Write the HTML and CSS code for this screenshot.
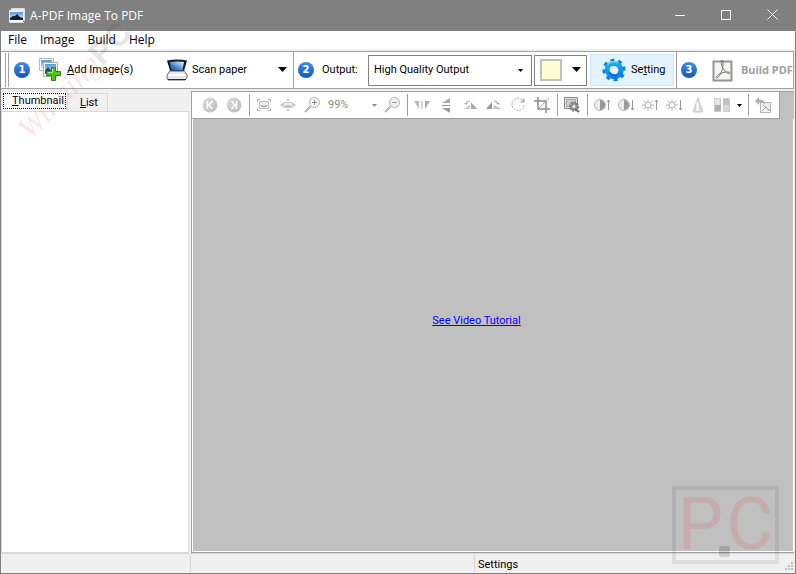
FILE: index.html
```html
<!DOCTYPE html>
<html lang="en">
<head>
<meta charset="utf-8">
<title>A-PDF Image To PDF</title>
<link rel="stylesheet" href="styles.css">
</head>
<body>
<svg class="defs" aria-hidden="true">
  <defs>
    <linearGradient id="sky" x1="0" y1="0" x2="0" y2="1"><stop offset="0" stop-color="#4d9ae0"/><stop offset="1" stop-color="#e4f2fc"/></linearGradient>
    <linearGradient id="scan" x1="0" y1="1" x2="1" y2="0"><stop offset="0" stop-color="#0b3f86"/><stop offset=".5" stop-color="#5c9fd8"/><stop offset="1" stop-color="#f4faff"/></linearGradient>
    <linearGradient id="grey" x1="0" y1="0" x2="1" y2="1"><stop offset="0" stop-color="#dedede"/><stop offset="1" stop-color="#b9b9b9"/></linearGradient>
    <linearGradient id="gear" x1="0" y1="0" x2="1" y2="1"><stop offset="0" stop-color="#27b1fb"/><stop offset="1" stop-color="#0679e4"/></linearGradient>
  </defs>
</svg>
<div class="window">
  <header class="titlebar">
    <svg class="app-icon" width="16" height="16" viewBox="0 0 16 16"><path d="M2.5.5h13v12h-13z" fill="#eee" stroke="#ddd"/><path d="M.5 2.500h13v12H.5z" fill="#fff" stroke="#e8e8e8"/><path d="M1 4h13v8H1z" fill="url(#sky)"/><path d="M1 12v-2l3-2 2 0 2-2 3 3 3 1v2z" fill="#16202a"/><path d="M1 14.500h14" stroke="#ddd"/></svg>
    <h1>A-PDF Image To PDF</h1>
    <div class="window-buttons">
      <button type="button" aria-label="Minimize"><svg width="11" height="11" viewBox="0 0 11 11"><path d="M0 6.500h10"/></svg></button>
      <button type="button" aria-label="Maximize"><svg width="11" height="11" viewBox="0 0 11 11"><path d="M.5 1.500h9v9h-9z"/></svg></button>
      <button type="button" aria-label="Close"><svg width="11" height="11" viewBox="0 0 11 11"><path d="M.5.5l10 10M10.500.5l-10 10"/></svg></button>
    </div>
  </header>

  <nav class="menubar">
    <button type="button">File</button>
    <button type="button">Image</button>
    <button type="button">Build</button>
    <button type="button">Help</button>
  </nav>

  <div class="toolbar">
    <span class="grip"></span>
    <span class="step">1</span>
    <button type="button" class="tool add">
      <svg width="23" height="24" viewBox="0 0 23 24"><path d="M.5.5h14v12H.5z" fill="#fff" stroke="#b4b8b8"/><path d="M2 2h11v9H2z" fill="url(#sky)"/><path d="M4.500 4.500h14v14h-14z" fill="#fff" stroke="#a8adad"/><path d="M6 6h11v10H6z" fill="url(#sky)"/><path d="M6 16v-4l3-3 3 3v4z" fill="#34515c"/><path d="M12.500 9.500h4v4h5v4h-5v5h-4v-5h-5v-4h5z" fill="#49c51b" stroke="#238a16" stroke-linejoin="round"/><path d="M13.500 11v3.500H9" fill="none" stroke="#a9ee6c"/></svg>
      <span><u>A</u>dd Image(s)</span>
    </button>
    <button type="button" class="tool scan">
      <svg width="22" height="22" viewBox="0 0 22 22"><path d="M1 1.500Q11-.5 21 1.500L18 12H4z" fill="#111c28"/><path d="M4 3q7-1 14 0l-1.500 8H5z" fill="url(#scan)"/><path d="M4 12h14l3 4v3l-2 2H2l-1-2v-3z" fill="#e6e9ec" stroke="#5f6770"/><path d="M3 16h16" stroke="#fff" stroke-width="2"/><path d="M2 20.500h18" stroke="#252d35"/><path d="M7 12.500h9" stroke="#8aa4ba"/></svg>
      <span>Scan paper</span>
      <svg class="arrow" width="9" height="6" viewBox="0 0 9 6"><path d="M0 0h9L4.500 5z"/></svg>
    </button>
    <span class="divider"></span>
    <span class="step">2</span>
    <label class="output-label" for="output">Output:</label>
    <span class="select-box">
      <select id="output"><option>High Quality Output</option></select>
      <svg class="arrow" width="5" height="3" viewBox="0 0 5 3"><path d="M0 0h5L2.500 3z"/></svg>
    </span>
    <button type="button" class="color-box" aria-label="Background color">
      <span class="swatch"></span>
      <svg class="arrow" width="9" height="6" viewBox="0 0 9 6"><path d="M0 0h9L4.500 5z"/></svg>
    </button>
    <button type="button" class="tool setting">
      <svg width="24" height="24" viewBox="-12 -12 24 24"><g fill="none" transform="rotate(25)"><ellipse rx="9.500" ry="9" pathLength="16" stroke="#0b82e6" stroke-width="4.500" stroke-dasharray="1 1"/><ellipse rx="7" ry="6.500" stroke="url(#gear)" stroke-width="5"/><path d="M-8-2Q-7-8 0-8" stroke="#6fd2ff" stroke-width="1.500"/><path d="M5 3Q2 7-4 4" stroke="#0a62c4"/></g></svg>
      <span>Se<u>t</u>ting</span>
    </button>
    <span class="divider"></span>
    <span class="step">3</span>
    <button type="button" class="tool build" disabled>
      <svg width="22" height="23" viewBox="0 0 22 23"><path d="M1.500 2.500h18v19h-18z" fill="#f4f4f2" stroke="#96968f" stroke-width="2"/><path d="M10 1c-2 2 0 8 3 11 2 3 5 3 5 2 0-2-9-1-12 2-2 2-2 3-1 3 2 0 6-8 6-13 0-3 0-5-1-5z" fill="none" stroke="#777"/></svg>
      <span>Build PDF</span>
    </button>
  </div>

  <main class="workspace">
    <aside class="sidebar">
      <div class="tabs" role="tablist">
        <button type="button" role="tab" aria-selected="true" class="tab active"><span><u>T</u>humbnail</span></button>
        <button type="button" role="tab" aria-selected="false" class="tab"><span><u>L</u>ist</span></button>
      </div>
      <div class="thumbs" role="tabpanel"></div>
    </aside>

    <section class="viewer">
      <div class="image-tools">
        <button type="button" aria-label="Previous"><svg viewBox="0 0 16 16"><circle cx="8" cy="8" r="7.500" fill="url(#grey)"/><path d="M5.500 4v8M10.500 4L7 8l3.500 4" fill="none" stroke="#fff" stroke-width="1.500"/></svg></button>
        <button type="button" aria-label="Next"><svg viewBox="0 0 16 16"><circle cx="8" cy="8" r="7.500" fill="url(#grey)"/><path d="M10.500 4v8M5.500 4L9 8l-3.500 4" fill="none" stroke="#fff" stroke-width="1.500"/></svg></button>
        <span class="divider"></span>
        <button type="button" aria-label="Fit window"><svg viewBox="0 0 16 16"><path d="M1.500 5V2.500H4M12 2.500h2.500V5M1.500 11v2.500H4M12 13.500h2.500V11" fill="none" stroke="#aaa"/><path d="M3.500 4.500h9v7h-9z" fill="#eee" stroke="#c4c4c4"/><path d="M5 10V9l1-1 2 1 2-1 1 1v1z" fill="#aaa"/></svg></button>
        <button type="button" aria-label="Actual size"><svg viewBox="0 0 16 16"><path d="M3.500 5.500h9v5h-9z" fill="#eee" stroke="#ccc"/><path d="M5 10V9l2-1 1 1 1-1 2 1v1z" fill="#bbb"/><path d="M8 1l2 3H6zM8 15l2-3H6zM0 8l3-2v4zM16 8l-3-2v4z" fill="#ccc"/></svg></button>
        <button type="button" aria-label="Zoom in"><svg viewBox="0 0 16 16"><circle cx="10.500" cy="5.500" r="5" fill="#f4f4f4" stroke="#b4b4b4"/><path d="M10.500 3v5M8 5.500h5" stroke="#888"/><path d="M1 15L6.500 9.500" stroke="#b0b0b0" stroke-width="2"/></svg></button>
        <span class="zoom"><span>99%</span><svg class="arrow" width="5" height="3" viewBox="0 0 5 3"><path d="M0 0h5L2.500 3z"/></svg></span>
        <button type="button" aria-label="Zoom out"><svg viewBox="0 0 16 16"><circle cx="10.500" cy="5.500" r="5" fill="#eee" stroke="#b4b4b4"/><path d="M8 5.500h5" stroke="#999"/><path d="M1 15L6.500 9.500" stroke="#b5b5b5" stroke-width="2"/></svg></button>
        <span class="divider"></span>
        <button type="button" aria-label="Flip horizontally"><svg viewBox="0 0 16 16"><path d="M0 4h5v8z" fill="#bbb"/><path d="M8 4v8" stroke="#aaa"/><path d="M11 4h5l-5 8z" fill="#aaa"/></svg></button>
        <button type="button" aria-label="Flip vertically"><svg viewBox="0 0 16 16"><path d="M12 1v5H4z" fill="#aaa"/><path d="M4 8.500h8" stroke="#999"/><path d="M4 11h8v5z" fill="#999"/></svg></button>
        <button type="button" aria-label="Rotate left"><svg viewBox="0 0 16 16"><path d="M1 12h7V8z" fill="#ccc"/><path d="M9 12h6L9 5z" fill="#aaa"/><path d="M4 7q0-3 4-3" fill="none" stroke="#aaa"/><path d="M2 6h4L4 8z" fill="#aaa"/></svg></button>
        <button type="button" aria-label="Rotate right"><svg viewBox="0 0 16 16"><path d="M0 12h6V5z" fill="#999"/><path d="M7 12h9L8 8z" fill="#c4c4c4"/><path d="M8 4q4 0 4 3" fill="none" stroke="#aaa"/><path d="M10 6h4l-2 2z" fill="#aaa"/></svg></button>
        <button type="button" aria-label="Rotate by angle"><svg viewBox="0 0 16 16"><path d="M12 3A6 6 0 1 0 14 8" fill="none" stroke="#aaa" stroke-dasharray="2 1"/><path d="M10 5.500h4.500V1z" fill="#aaa"/></svg></button>
        <button type="button" aria-label="Crop"><svg viewBox="0 0 16 16"><path d="M4 0v12h12M0 4h12v12" fill="none" stroke="#8d8d8d" stroke-width="1.500"/><path d="M4 12L15 1" stroke="#aaa"/></svg></button>
        <span class="divider"></span>
        <button type="button" aria-label="Image options"><svg viewBox="0 0 16 16"><path d="M.5.5h13v11H.5z" fill="#ddd" stroke="#888"/><path d="M2.500 2.500h9v7h-9z" fill="#ccc" stroke="#aaa"/><circle cx="10" cy="9.500" r="4" fill="#999" stroke="#777" stroke-width="2" stroke-dasharray="2 1"/><circle cx="10" cy="9.500" r="1.500" fill="#eee"/><path d="M11 12l4 3" stroke="#666" stroke-width="2"/></svg></button>
        <span class="divider"></span>
        <button type="button" aria-label="Increase contrast"><svg viewBox="0 0 16 16"><circle cx="6" cy="8" r="5.500" fill="#eee" stroke="#b4b4b4"/><path d="M6 3a5 5 0 0 1 0 10z" fill="#999"/><path d="M14.500 13V3M13 5l1.500-2L16 5" fill="none" stroke="#999"/></svg></button>
        <button type="button" aria-label="Decrease contrast"><svg viewBox="0 0 16 16"><circle cx="6" cy="8" r="5.500" fill="#eee" stroke="#b4b4b4"/><path d="M6 3a5 5 0 0 1 0 10z" fill="#999"/><path d="M14.500 3v10M13 11l1.500 2 1.500-2" fill="none" stroke="#999"/></svg></button>
        <button type="button" aria-label="Increase brightness"><svg viewBox="0 0 16 16"><path d="M6 2v12M0 8h12M1.500 3.500l9 9M10.500 3.500l-9 9" stroke="#bbb"/><circle cx="6" cy="8" r="3" fill="#f4f4f4" stroke="#bbb"/><path d="M14.500 13V3M13 5l1.500-2L16 5" fill="none" stroke="#999"/></svg></button>
        <button type="button" aria-label="Decrease brightness"><svg viewBox="0 0 16 16"><path d="M6 2v12M0 8h12M1.500 3.500l9 9M10.500 3.500l-9 9" stroke="#bbb"/><circle cx="6" cy="8" r="3" fill="#f4f4f4" stroke="#bbb"/><path d="M14.500 3v10M13 11l1.500 2 1.500-2" fill="none" stroke="#999"/></svg></button>
        <button type="button" aria-label="Sharpen"><svg viewBox="0 0 16 16"><path d="M8 1l5 14H3z" fill="#ddd" stroke="#c8c8c8"/><path d="M7.500 5v9" stroke="#fafafa" stroke-width="2"/></svg></button>
        <button type="button" aria-label="Color mode"><svg viewBox="0 0 16 16"><path d="M.5 1.500h6v13h-6z" fill="#e4e4e4" stroke="#ccc"/><path d="M1 8h6v6H1z" fill="#b0b0b0"/><path d="M9.500 1.500h6v13h-6z" fill="#d8d8d8" stroke="#ccc"/><path d="M9 2h6v6H9z" fill="#c0c0c0"/></svg></button>
        <button type="button" class="drop" aria-label="Color mode menu"><svg class="arrow" width="5" height="3" viewBox="0 0 5 3"><path d="M0 0h5L2.500 3z"/></svg></button>
        <span class="divider"></span>
        <button type="button" aria-label="Restore image"><svg viewBox="0 0 16 16"><path d="M5.500 5.500h10v10h-10z" fill="#eee" stroke="#b4b4b4"/><path d="M7 14l4-4 4 4M8 8l6 5" stroke="#aaa" fill="none"/><path d="M0 4l4-4v2.500q6 0 6 5-2-2.500-6-2V8z" fill="#b0b0b0"/></svg></button>
      </div>
      <div class="canvas"><a href="#tutorial">See Video Tutorial</a></div>
    </section>
  </main>

  <footer class="statusbar">
    <span class="cell cell-count"></span>
    <span class="cell cell-file"></span>
    <span class="cell cell-info">Settings</span>
    <svg class="resize" width="9" height="9" viewBox="0 0 9 9"><path d="M6 0h2v2H6zM3 3h2v2H3zM6 3h2v2H6zM0 6h2v2H0zM3 6h2v2H3zM6 6h2v2H6z"/></svg>
  </footer>

  <div class="script-mark" aria-hidden="true"><i>Winning</i><b>PC</b></div>
  <div class="logo-mark" aria-hidden="true"><span>P</span><i></i><span>C</span></div>
</div>
</body>
</html>
```
FILE: styles.css
```css
* { box-sizing: border-box; }

body {
  margin: 0;
  font: 11px/14px Roboto, "Noto Sans", sans-serif;
  color: #000;
}

button {
  margin: 0;
  padding: 0;
  border: 0;
  background: none;
  color: inherit;
  font: inherit;
}

u { text-underline-offset: 1px; }

.defs {
  position: absolute;
  width: 0;
  height: 0;
}

.window {
  position: relative;
  display: flex;
  flex-direction: column;
  min-height: 100vh;
  border: 1px solid #7f7f7f;
  background: #f0f0f0;
  overflow: hidden;
}

.titlebar {
  display: flex;
  align-items: center;
  height: 30px;
  padding-left: 8px;
  background: #808080;
  color: #fff;
}

.titlebar h1 {
  flex: 1;
  margin: 0 0 0 5px;
  font: 12px/16px "Open Sans", "Noto Sans", sans-serif;
}

.window-buttons { display: flex; }

.window-buttons button {
  width: 46px;
  height: 30px;
}

.window-buttons svg {
  fill: none;
  stroke: #fff;
}

.menubar {
  display: flex;
  gap: 13px;
  height: 19px;
  padding-left: 7px;
  border-bottom: 1px solid #f0f0f0;
  background: #fff;
  font: 12px/18px "Open Sans", "Noto Sans", sans-serif;
}

.toolbar {
  display: flex;
  align-items: center;
  height: 38px;
  margin: 1px 1px 0 0;
  border: 1px solid #a0a0a0;
  border-left: 0;
  background: #fff;
}

.grip {
  width: 4px;
  height: 34px;
  margin: 0 5px 0 4px;
  border: solid #a0a0a0;
  border-width: 0 1px;
}

.step {
  width: 16px;
  height: 16px;
  border-radius: 50%;
  background: linear-gradient(#3f8df0, #1557b5);
  color: #fff;
  font: bold 10px/16px "DejaVu Sans", sans-serif;
  text-align: center;
}

.tool {
  display: flex;
  align-items: center;
  height: 32px;
}

.add {
  gap: 5px;
  width: 118px;
  padding-left: 9px;
}

.scan {
  gap: 4px;
  width: 145px;
  padding: 0 6px 0 18px;
}

.scan .arrow { margin-left: auto; }

.toolbar .divider {
  width: 1px;
  height: 36px;
  background: #a0a0a0;
}

.toolbar .divider + .step { margin-left: 4px; }

.output-label {
  width: 54px;
  padding-left: 8px;
}

.select-box {
  display: grid;
  align-items: center;
  flex: 0 1 164px;
  height: 31px;
  border: 1px solid #828282;
}

.select-box > * { grid-area: 1 / 1; }

.select-box select {
  width: 100%;
  height: 29px;
  padding: 0 5px;
  border: 0;
  background: #fff;
  color: #000;
  font: inherit;
  appearance: none;
}

.select-box .arrow {
  justify-self: end;
  margin-right: 8px;
  pointer-events: none;
}

.color-box {
  display: flex;
  align-items: center;
  justify-content: space-between;
  width: 53px;
  height: 31px;
  margin: 0 3px 0 2px;
  padding: 0 5px;
  border: 1px solid #828282;
}

.swatch {
  width: 22px;
  height: 22px;
  border: 2px solid #c0c0c0;
  background: #fffbd2;
}

.setting {
  gap: 5px;
  width: 84px;
  margin-right: 2px;
  padding-left: 11px;
  border: 1px solid #cce8ff;
  background: #e5f3ff;
}

.build {
  flex: 1;
  gap: 7px;
  padding-left: 15px;
  color: #a0a0a0;
  font-family: "Noto Sans", sans-serif;
  font-weight: bold;
  white-space: nowrap;
}

.workspace {
  display: flex;
  flex: 1;
  gap: 2px;
  padding: 2px 1px 0 0;
}

.sidebar {
  display: flex;
  flex-direction: column;
  width: 188px;
}

.tabs {
  display: flex;
  align-items: flex-end;
  height: 20px;
  padding-left: 1px;
}

.tab {
  height: 18px;
  padding: 0 9px 0 12px;
  border: 1px solid #d9d9d9;
  border-bottom: 0;
}

.tab.active {
  height: 20px;
  padding: 2px 1px 3px;
  border-color: #f0f0f0;
  background: #fff;
}

.tab.active span {
  display: block;
  padding: 0 1px 0 8px;
  outline: 1px dotted #000;
}

.thumbs {
  flex: 1;
  border: 1px solid #d9d9d9;
  background: #fff;
}

.viewer {
  display: flex;
  flex: 1;
  flex-direction: column;
  min-width: 0;
  border: solid #a0a0a0;
  border-width: 1px 0 1px 1px;
  background: #c0c0c0;
}

.image-tools {
  display: flex;
  align-items: center;
  align-self: flex-start;
  height: 27px;
  padding: 0 4px 0 6px;
  border: solid #a0a0a0;
  border-width: 0 1px 1px 0;
  background: #fff;
}

.image-tools button {
  display: grid;
  place-items: center;
  width: 24px;
  height: 24px;
}

.image-tools button svg:not(.arrow) {
  width: 16px;
  height: 16px;
}

.image-tools .drop { width: 11px; }

.image-tools .divider {
  width: 6px;
  height: 22px;
  background: linear-gradient(#a0a0a0, #a0a0a0) center / 1px 100% no-repeat;
}

.zoom {
  display: flex;
  align-items: center;
  justify-content: space-between;
  width: 56px;
  padding: 0 3px 0 4px;
  color: #8d8d8d;
  fill: #8d8d8d;
}

.canvas {
  display: grid;
  flex: 1;
  place-items: center;
  padding-right: 33px;
  padding-bottom: 28px;
  border: 1px solid #fff;
  border-top: 0;
}

.canvas a { color: #00f; }

.statusbar {
  display: flex;
  align-items: center;
  height: 20px;
  border-top: 1px solid #d7d7d7;
}

.cell {
  height: 17px;
  border-right: 1px solid #d7d7d7;
  line-height: 20px;
}

.cell-count { width: 190px; }

.cell-file { width: 284px; }

.cell-info {
  flex: 1;
  padding-left: 3px;
  border: 0;
}

.resize {
  align-self: flex-end;
  margin: 0 1px 2px 0;
  fill: #bfbfbf;
}

.script-mark {
  position: absolute;
  top: 116px;
  left: 22px;
  display: flex;
  align-items: baseline;
  transform: rotate(-46deg);
  transform-origin: 0 50%;
  pointer-events: none;
  font: 31px/32px "Liberation Serif", serif;
}

.script-mark i {
  color: rgba(235, 50, 50, .15);
  font-style: italic;
}

.script-mark b {
  color: rgba(60, 60, 60, .15);
  font: bold 32px/32px "Liberation Sans", sans-serif;
}

.logo-mark {
  position: absolute;
  right: 16px;
  bottom: 9px;
  display: flex;
  align-items: center;
  justify-content: space-around;
  width: 107px;
  height: 78px;
  border: 4px solid rgba(0, 0, 0, .08);
  pointer-events: none;
  color: rgba(220, 60, 80, .15);
  font: 72px/70px Roboto, sans-serif;
}

.logo-mark i {
  position: absolute;
  bottom: 3px;
  left: 43px;
  width: 11px;
  height: 11px;
  border-radius: 2px;
  background: rgba(0, 0, 0, .15);
}
```
